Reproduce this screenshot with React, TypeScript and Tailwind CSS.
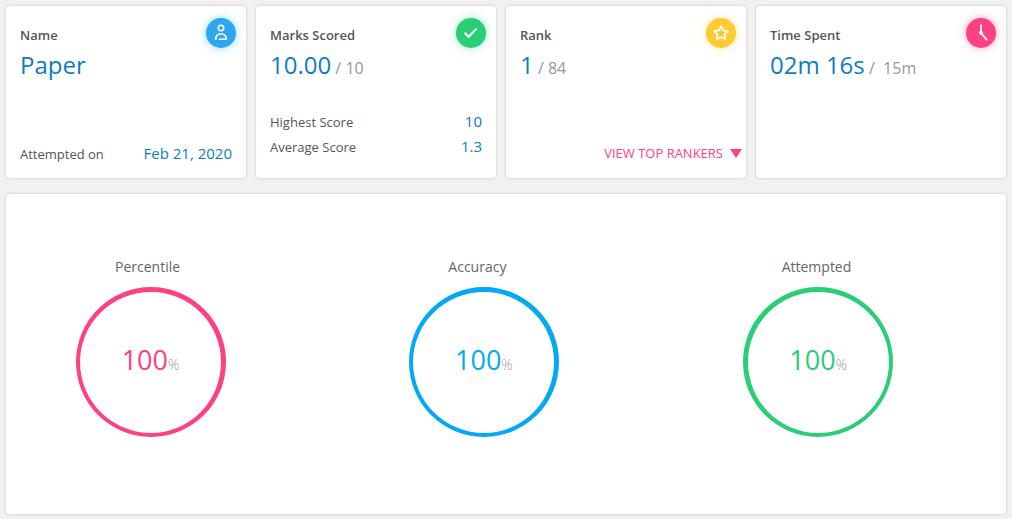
import type { ReactNode } from 'react';

interface SummaryCardProps {
  title: string;
  value: string;
  suffix?: string;
  icon: ReactNode;
  iconClass: string;
  last?: boolean;
  children?: ReactNode;
}

function SummaryCard({ title, value, suffix, icon, iconClass, last, children }: SummaryCardProps) {
  return (
    <div className={last ? 'flex w-1/4' : 'flex w-1/4 pr-[10px]'}>
      <section className="relative flex min-h-[172px] flex-1 flex-col rounded bg-white pt-5 shadow-[0_0_3px_rgba(0,0,0,0.2)]">
        <h2 className="px-[14px] text-[13px] leading-[18px] font-semibold text-[#555]">{title}</h2>
        <p className="mt-[3px] px-[14px] text-2xl leading-[36px] whitespace-pre text-[#0d7dc1]">
          {value}
          {suffix && <span className="text-base text-[#97979b]">{suffix}</span>}
        </p>
        <span
          className={`absolute top-3 right-[10px] flex h-[30px] w-[30px] items-center justify-center rounded-full ${iconClass}`}
        >
          {icon}
        </span>
        <div className="mt-auto">{children}</div>
      </section>
    </div>
  );
}

function StatRow({ label, value }: { label: string; value: string }) {
  return (
    <div className="flex h-[25px] items-baseline justify-between px-[14px] leading-[25px]">
      <span className="text-[13px] text-[#555]">{label}</span>
      <span className="text-[15px] text-[#0d7dc1]">{value}</span>
    </div>
  );
}

const UserIcon = () => (
  <svg className="h-[30px] w-[30px]" viewBox="0 0 30 30" fill="none" stroke="#fff" strokeWidth="1.6">
    <circle cx="15" cy="10" r="2.7" />
    <path d="M9.8 22v-1.4a5.2 4.8 0 0 1 10.4 0v.7h-7.4" />
  </svg>
);

const CheckIcon = () => (
  <svg className="h-[30px] w-[30px]" viewBox="0 0 30 30" fill="none" stroke="#fff" strokeWidth="2">
    <path d="M8.6 14.8l4 4 8-8.2" />
  </svg>
);

const StarIcon = () => (
  <svg className="h-[30px] w-[30px]" viewBox="0 0 30 30" fill="none" stroke="#fff" strokeWidth="1.7" strokeLinejoin="round">
    <path d="M15 8.2l2.1 4.1 4.8.8-3.3 3.4.7 4.6-4.3-2-4.3 2 .7-4.6-3.3-3.4 4.8-.8z" />
  </svg>
);

const ClockIcon = () => (
  <svg className="h-[30px] w-[30px]" viewBox="0 0 30 30" fill="none" stroke="#fff" strokeWidth="1.8">
    <path d="M15 6.5V15l6 7.2" />
    <circle cx="15" cy="15" r="2" fill="#fff" stroke="none" />
  </svg>
);

const rings = [
  { label: 'Percentile', value: 100, border: 'border-r-[5px] border-l-4 border-[#ff4081]', text: 'text-[#ff4081]' },
  { label: 'Accuracy', value: 100, border: 'border-r-[5px] border-l-4 border-[#03a9f4]', text: 'text-[#03a9f4]' },
  { label: 'Attempted', value: 100, border: 'border-r-4 border-l-[5px] border-[#29ce76]', text: 'text-[#29ce76]' },
];

export default function App() {
  return (
    <main className="min-h-screen bg-[#f1f1f1] p-[6px] font-['Open_Sans',sans-serif]">
      <div className="flex">
        <SummaryCard
          title="Name"
          value="Paper"
          icon={<UserIcon />}
          iconClass="bg-[#2ea7f0] shadow-[0_0_8px_rgba(3,190,255,0.5)]"
        >
          <div className="pb-3">
            <StatRow label="Attempted on" value="Feb 21, 2020" />
          </div>
        </SummaryCard>

        <SummaryCard
          title="Marks Scored"
          value="10.00"
          suffix=" / 10"
          icon={<CheckIcon />}
          iconClass="bg-[#29ce76] shadow-[0_0_8px_rgba(41,226,126,0.5)]"
        >
          <div className="pb-[19px]">
            <StatRow label="Highest Score" value="10" />
            <StatRow label="Average Score" value="1.3" />
          </div>
        </SummaryCard>

        <SummaryCard
          title="Rank"
          value="1"
          suffix=" / 84"
          icon={<StarIcon />}
          iconClass="bg-[#ffca33] shadow-[0_0_8px_rgba(255,202,51,0.5)]"
        >
          <div className="flex justify-end pr-1 pb-3">
            <button type="button" className="flex items-center gap-[7px] text-[13px] leading-[25px] text-[#ff4081]">
              VIEW TOP RANKERS
              <svg className="h-[9px] w-3" viewBox="0 0 12 9" fill="currentColor">
                <path d="M0 0h12L6 9z" />
              </svg>
            </button>
          </div>
        </SummaryCard>

        <SummaryCard
          title="Time Spent"
          value="02m 16s"
          suffix=" /  15m"
          icon={<ClockIcon />}
          iconClass="bg-[#ff4081] shadow-[0_0_8px_rgba(255,64,129,0.5)]"
          last
        />
      </div>

      <section className="mt-4 grid grid-cols-3 rounded bg-white pt-16 pb-[77px] shadow-[0_0_3px_rgba(0,0,0,0.2)]">
        {rings.map((ring) => (
          <div key={ring.label} className="pl-[70px]">
            <h3 className="pl-[39px] text-sm leading-[18px] text-[#666]">{ring.label}</h3>
            <div
              className={`mt-[11px] flex h-[150px] w-[150px] items-center justify-center rounded-full border-t-[5px] border-b-4 pb-[6px] ${ring.border}`}
            >
              <p className={`text-[27px] leading-[36px] ${ring.text}`}>
                {ring.value}
                <span className="text-sm font-light text-[#999]">%</span>
              </p>
            </div>
          </div>
        ))}
      </section>
    </main>
  );
}
